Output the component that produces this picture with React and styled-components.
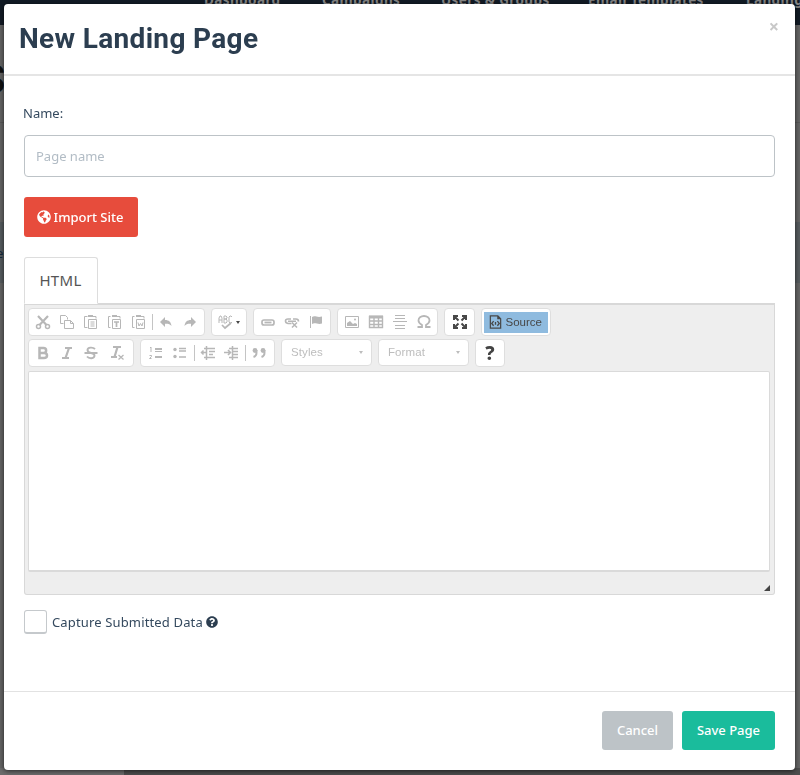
import React, { useState } from "react";
import styled, { createGlobalStyle } from "styled-components";
import { FaGlobeAmericas, FaQuestionCircle } from "react-icons/fa";

const GlobalStyle = createGlobalStyle`
  * {
    box-sizing: border-box;
  }

  body {
    margin: 0;
    background-color: #646464;
    color: #34495e;
    font-family: "Noto Sans", "Open Sans", sans-serif;
    font-size: 13px;
    overflow: hidden;
  }

  button, input {
    font-family: inherit;
  }
`;

const Page = styled.div`
  height: 775px;
  overflow: hidden;
  background-color: #646464;
`;

const Navbar = styled.nav`
  display: flex;
  height: 25px;
  padding-left: 204px;
  background-color: #121b25;
`;

const NavItem = styled.span`
  flex: none;
  width: ${({ $width }) => $width}px;
  margin-top: -9px;
  color: #868686;
  font-size: 13.5px;
  font-weight: 700;
  line-height: 18px;
  letter-spacing: 0.4px;
  white-space: nowrap;
`;

const PageHeading = styled.div`
  height: 97px;
  padding-top: 31px;
  margin-left: -19px;
  color: #111;
  font-family: Roboto, sans-serif;
  font-size: 40px;
  font-weight: 500;
  line-height: 48px;
`;

const PageGap = styled.div`
  height: 100px;
  border-top: 1px solid #585858;
`;

const PageRow = styled.div`
  height: 61px;
  padding-top: 22px;
  margin-left: -4px;
  background-color: #565b5e;
  color: #14283c;
  line-height: 18px;
`;

const Scrollbar = styled.div`
  position: absolute;
  left: 0;
  bottom: 0;
  width: 100%;
  height: 7px;
  background: linear-gradient(to right, #6c6c6c 124px, #4d4d4d 124px);
`;

const Overlay = styled.div`
  position: fixed;
  inset: 0;
  padding: 4px 5px 5px 4px;
`;

const Modal = styled.div`
  display: flex;
  flex-direction: column;
  height: 766px;
  border-radius: 4px;
  background-color: #fff;
  box-shadow: 0 1px 5px rgba(0, 0, 0, 0.65);
`;

const Header = styled.div`
  display: flex;
  justify-content: space-between;
  height: 72px;
  padding: 17px 16px 0 15px;
  border-bottom: 2px solid #e5e5e5;
`;

const Title = styled.h4`
  margin: 0;
  color: #2c3e50;
  font-family: Roboto, sans-serif;
  font-size: 28px;
  font-weight: 700;
  line-height: 36px;
  letter-spacing: 0.33px;
`;

const Close = styled.button`
  height: 14px;
  margin-top: -2px;
  padding: 0;
  border: 0;
  background: none;
  color: #c8c8c8;
  font-size: 18px;
  font-weight: bold;
  line-height: 12px;
`;

const Body = styled.div`
  display: flex;
  flex: 1;
  flex-direction: column;
  align-items: flex-start;
  padding: 28px 20px 0;
`;

const Label = styled.label`
  margin: 0 0 13px -1px;
  line-height: 18px;
`;

const Input = styled.input`
  width: 100%;
  height: 42px;
  padding: 0 11px;
  border: 1px solid #bdc3c7;
  border-radius: 4px;
  outline: none;
  font-size: 13px;

  &::placeholder {
    color: #b2bcc5;
  }
`;

const Button = styled.button`
  display: flex;
  align-items: center;
  justify-content: center;
  gap: 3px;
  width: ${({ $width }) => $width}px;
  height: ${({ $height }) => $height || 39}px;
  padding: 0 0 1px;
  border: 0;
  border-radius: 3px;
  background-color: ${({ $color }) => $color};
  color: #fff;
  font-size: 13px;
  font-weight: 500;
  white-space: nowrap;
`;

const ImportButton = styled(Button)`
  margin: 20px 0;
  padding: 0 2px 0 0;
`;

const Tab = styled.div`
  z-index: 1;
  width: 74px;
  height: 47px;
  margin-bottom: -1px;
  padding-right: 1px;
  border: 1px solid #ddd;
  border-bottom-color: #fff;
  border-radius: 3px 3px 0 0;
  background-color: #fff;
  color: #555;
  font-size: 15px;
  line-height: 45px;
  letter-spacing: 0.3px;
  text-align: center;
`;

const Editor = styled.div`
  display: flex;
  flex-direction: column;
  width: 100%;
  height: 292px;
  padding: 3px 4px 0 3px;
  border: 1px solid #d8d8d8;
  border-top: 2px solid #d8d8d8;
  border-radius: 0 0 3px 3px;
  background-color: #eee;
`;

const ToolRow = styled.div`
  display: flex;
  gap: 6px;
  height: 28px;
  margin-bottom: 3px;
`;

const Group = styled.div`
  display: flex;
  align-items: center;
  justify-content: center;
  width: ${({ $width }) => $width}px;
  border: 1px solid #dedede;
  border-radius: 4px;
  background-color: #fff;
`;

const Tool = styled.span`
  display: flex;
  justify-content: center;
  width: ${({ $width }) => $width || 24}px;
  color: ${({ $active }) => ($active ? "#484848" : "#b7b7b7")};
`;

const Separator = styled.span`
  width: 1px;
  height: 16px;
  margin: 0 1px;
  background-color: #c4c4c4;
`;

const Source = styled.span`
  display: flex;
  align-items: center;
  gap: 3px;
  width: 64px;
  height: 21px;
  padding-left: 4px;
  margin-right: 1px;
  background-color: #8fbbdf;
  color: #484848;
  font-family: "Liberation Sans", Arial, sans-serif;
  font-size: 11.5px;
`;

const Combo = styled(Group)`
  justify-content: space-between;
  height: 27px;
  padding: 0 8px 1px 9px;
  color: #bdbdbd;
  font-family: "Liberation Sans", Arial, sans-serif;
  font-size: 11.5px;
  letter-spacing: 0.1px;
`;

const Caret = styled.span`
  border: 2.5px solid transparent;
  border-top: 3px solid currentColor;
  border-bottom: 0;
`;

const Help = styled.span`
  color: #444;
  font-size: 19px;
  font-weight: 800;
  line-height: 26px;
`;

const TextArea = styled.div`
  height: 201px;
  margin-top: 1px;
  border: 1px solid #dadada;
  border-bottom-width: 2px;
  border-radius: 2px;
  background-color: #fff;
`;

const Resizer = styled.div`
  align-self: flex-end;
  margin-top: 13px;
  border: 3px solid #444;
  border-top-color: transparent;
  border-left-color: transparent;
`;

const CheckRow = styled.div`
  display: flex;
  align-items: center;
  height: 24px;
  margin-top: 15px;
`;

const Checkbox = styled.span`
  width: 23px;
  height: 24px;
  margin-right: 5px;
  border: 1px solid #c5c9cc;
  border-bottom-width: 2px;
  border-radius: 3px;
`;

const CheckLabel = styled.span`
  margin-right: 3px;
  letter-spacing: 0.15px;
`;

const Footer = styled.div`
  display: flex;
  justify-content: flex-end;
  gap: 9px;
  height: 79px;
  padding: 19px 20px 0;
  border-top: 1px solid #e2e2e2;
`;

const icons = {
  cut: <><circle cx="3.5" cy="12.5" r="2" strokeWidth="1.5" /><circle cx="12.5" cy="12.5" r="2" strokeWidth="1.5" /><path d="M3 2l8.500 9M13 2l-8.500 9" strokeWidth="2.2" /></>,
  copy: <><path d="M4.500 9.500h-3v-8h5l2 2v2" /><path d="M5.500 6.500h6l3 3v5h-9zM11.500 6.500v3h3" /></>,
  paste: <><path d="M4.500 2.500h-3v11h3M10 2.500h3v2" /><path d="M5 2h5" strokeWidth="2" /><path d="M5.500 5.500h8v9h-8zM7.500 8h4M7.500 10h4M7.500 12h4" /></>,
  pasteText: <><path d="M3.500 2.500h-2v11h2M10 2.500h3v2" /><path d="M5 2h5" strokeWidth="2" /><path d="M5.500 5.500h8v9h-8z" /><path d="M7 8h5M9.500 8v5" strokeWidth="1.700" /></>,
  pasteWord: <><path d="M3.500 2.500h-2v11h2M10 2.500h3v2" /><path d="M5 2h5" strokeWidth="2" /><path d="M5.500 5.500h8v9h-8zM7 8.500l1 3.500 1.500-2.500L11 12l1-3.500" /></>,
  undo: <path fill="currentColor" stroke="none" d="M7 3v3c4 0 6 2 6.500 6C12 10 10 9.500 7 9.700V13L2 8z" />,
  redo: <path fill="currentColor" stroke="none" d="M9 3v3c-4 0-6 2-6.500 6C4 10 6 9.500 9 9.700V13l5-5z" />,
  spell: <><path d="M1 9V4l1-2h1l1 2v5M1 6h3M6 2v7h2l1-1V6L8 5H6h2l1-1V3L8 2zM14 3l-1-1h-1l-1 1v5l1 1h1l1-1" /><path d="M4 11l3 3 6-5" strokeWidth="1.700" /></>,
  link: <><rect x="2" y="6" width="12" height="5" rx="2" strokeWidth="1.700" /><path d="M4.500 8.500h7" strokeWidth="1.800" /></>,
  unlink: <><path d="M7 5H4Q1.500 5 1.500 7T4 9.500h3.500M9 5h3q2.500 0 2.500 2.500M4 7.300h8" strokeWidth="1.600" /><path d="M8 8.500l5 5M13 8.500l-5 5" strokeWidth="1.500" /></>,
  anchor: <><path d="M2.500 2v12" /><path fill="currentColor" stroke="none" d="M4 3c3-2 5 1 10-.5v7C10 11 7 8 4 10z" /></>,
  image: <><path d="M1.500 2.500h13v11h-13z" /><path fill="currentColor" stroke="none" d="M3 12V9l3-2 3 3 2-1 2 1v2z" /><circle cx="11" cy="5.500" r="1" fill="currentColor" stroke="none" /></>,
  table: <><path d="M1.500 2.500h13v11h-13zM6 3v10M10.500 3v10M1 7h14M1 10.500h14" strokeWidth="1.400" /><path d="M1 3h14" strokeWidth="3" /></>,
  rule: <path d="M3 1.500h10M3 4.500h10M3 11.500h10M3 14.500h10M1 7.500h14" />,
  omega: <path strokeWidth="1.800" d="M1.500 13h4.500v-2C3.500 9.500 2.500 8 2.500 6.500 2.500 4 4.800 2 8 2s5.500 2 5.500 4.500c0 1.500-1 3-3.500 4.500v2h4.500" />,
  maximize: <path strokeWidth="2" d="M2 6V2h4M10 2h4v4M14 10v4h-4M6 14H2v-4M3 3l3.500 3.500M13 3L9.500 6.500M13 13L9.500 9.500M3 13l3.500-3.500" />,
  source: <><path strokeWidth="1.300" d="M2.500 1.500h8l3 3v10h-11zM10.500 1.500v3h3" /><path strokeWidth="1.400" d="M6 7L4 9.500 6 12M10 7l2 2.500L10 12M8 8v3" /></>,
  bold: <path strokeWidth="2.500" d="M4.500 3v10H9c4 0 4-5 0-5H5h3.500c3.500 0 3.500-5 0-5z" />,
  italic: <path strokeWidth="2.200" d="M6 3h7M3 13h7M10 3L6.500 13" />,
  strike: <path strokeWidth="1.900" d="M12 4C10 2 4.500 2 4.500 5c0 4 7 2 7 5.500C11.500 14 6 14 4 11.500M1.500 8h13" />,
  clear: <><path strokeWidth="2.200" d="M4 2h8M2 12h6M8.500 2L5.500 12" /><path d="M9.500 10l5 4.500M14.500 10l-5 4.500" strokeWidth="1.300" /></>,
  numbers: <><path strokeWidth="2" d="M6 4h7M6 12h7" /><path d="M6 6.500h7M1 3l1-1v5M.5 10.500h2v1l-2 2h2" /></>,
  bullets: <><path strokeWidth="1.500" d="M6 3.500h7M6 6h7M6 12h7" /><circle cx="2" cy="4.500" r="1.700" fill="currentColor" stroke="none" /><circle cx="2" cy="11.500" r="1.700" fill="currentColor" stroke="none" /></>,
  outdent: <><path strokeWidth="1.500" d="M4 3.500h11M9 6.500h6M9 9.500h4M4 12.500h11M6.500 1v14" /><path strokeWidth="1.500" d="M1 7.500h6M3.500 5.500L1.500 7.500l2 2" /></>,
  indent: <><path strokeWidth="1.500" d="M5 3.500h9M9 6.500h5M9 9.500h5M5 12.500h9M8.500 1v14" /><path strokeWidth="1.600" d="M0 7.500h7M4 5l2.500 2.500L4 10" /></>,
  quote: <><circle cx="4" cy="5.500" r="2.400" fill="currentColor" stroke="none" /><circle cx="12" cy="5.500" r="2.400" fill="currentColor" stroke="none" /><path strokeWidth="1.900" d="M5.500 5v3q0 3-3 4M13.500 5v3q0 3-3 4" /></>,
};

const Icon = ({ name, width, active }) => (
  <Tool $width={width} $active={active}>
    <svg width="16" height="16" viewBox="0 0 16 16" fill="none" stroke="currentColor">
      {icons[name]}
    </svg>
  </Tool>
);

const App = () => {
  const [name, setName] = useState("");

  return (
    <>
      <GlobalStyle />
      <Page>
        <Navbar>
          <NavItem $width={118}>Dashboard</NavItem>
          <NavItem $width={119}>Campaigns</NavItem>
          <NavItem $width={147}>Users &amp; Groups</NavItem>
          <NavItem $width={158}>Email Templates</NavItem>
          <NavItem $width={100}>Landing Pages</NavItem>
        </Navbar>
        <PageHeading>S</PageHeading>
        <PageGap />
        <PageRow>e</PageRow>
        <Scrollbar />
      </Page>
      <Overlay>
        <Modal>
          <Header>
            <Title>New Landing Page</Title>
            <Close>×</Close>
          </Header>
          <Body>
            <Label>Name:</Label>
            <Input placeholder="Page name" value={name} onChange={(e) => setName(e.target.value)} />
            <ImportButton $width={114} $height={40} $color="#e74c3c">
              <FaGlobeAmericas size={14} />
              Import Site
            </ImportButton>
            <Tab>HTML</Tab>
            <Editor>
              <ToolRow>
                <Group $width={177}>
                  <Icon name="cut" />
                  <Icon name="copy" />
                  <Icon name="paste" />
                  <Icon name="pasteText" />
                  <Icon name="pasteWord" />
                  <Separator />
                  <Icon name="undo" />
                  <Icon name="redo" />
                </Group>
                <Group $width={36}>
                  <Icon name="spell" width={17} />
                  <Tool $width={6} $active>
                    <Caret />
                  </Tool>
                </Group>
                <Group $width={78}>
                  <Icon name="link" />
                  <Icon name="unlink" />
                  <Icon name="anchor" />
                </Group>
                <Group $width={101}>
                  <Icon name="image" />
                  <Icon name="table" />
                  <Icon name="rule" />
                  <Icon name="omega" />
                </Group>
                <Group $width={31}>
                  <Icon name="maximize" active />
                </Group>
                <Group $width={70}>
                  <Source>
                    <Icon name="source" width={15} active />
                    Source
                  </Source>
                </Group>
              </ToolRow>
              <ToolRow>
                <Group $width={106}>
                  <Icon name="bold" />
                  <Icon name="italic" />
                  <Icon name="strike" />
                  <Icon name="clear" width={29} />
                </Group>
                <Group $width={135}>
                  <Icon name="numbers" />
                  <Icon name="bullets" />
                  <Separator />
                  <Icon name="outdent" />
                  <Icon name="indent" />
                  <Separator />
                  <Icon name="quote" />
                </Group>
                <Combo $width={91}>
                  Styles
                  <Caret />
                </Combo>
                <Combo $width={91}>
                  Format
                  <Caret />
                </Combo>
                <Group $width={30}>
                  <Help>?</Help>
                </Group>
              </ToolRow>
              <TextArea />
              <Resizer />
            </Editor>
            <CheckRow>
              <Checkbox />
              <CheckLabel>Capture Submitted Data</CheckLabel>
              <FaQuestionCircle size={12} color="#2c3e50" />
            </CheckRow>
          </Body>
          <Footer>
            <Button $width={71} $color="#bdc3c7">Cancel</Button>
            <Button $width={93} $color="#1abc9c">Save Page</Button>
          </Footer>
        </Modal>
      </Overlay>
    </>
  );
};

export default App;
